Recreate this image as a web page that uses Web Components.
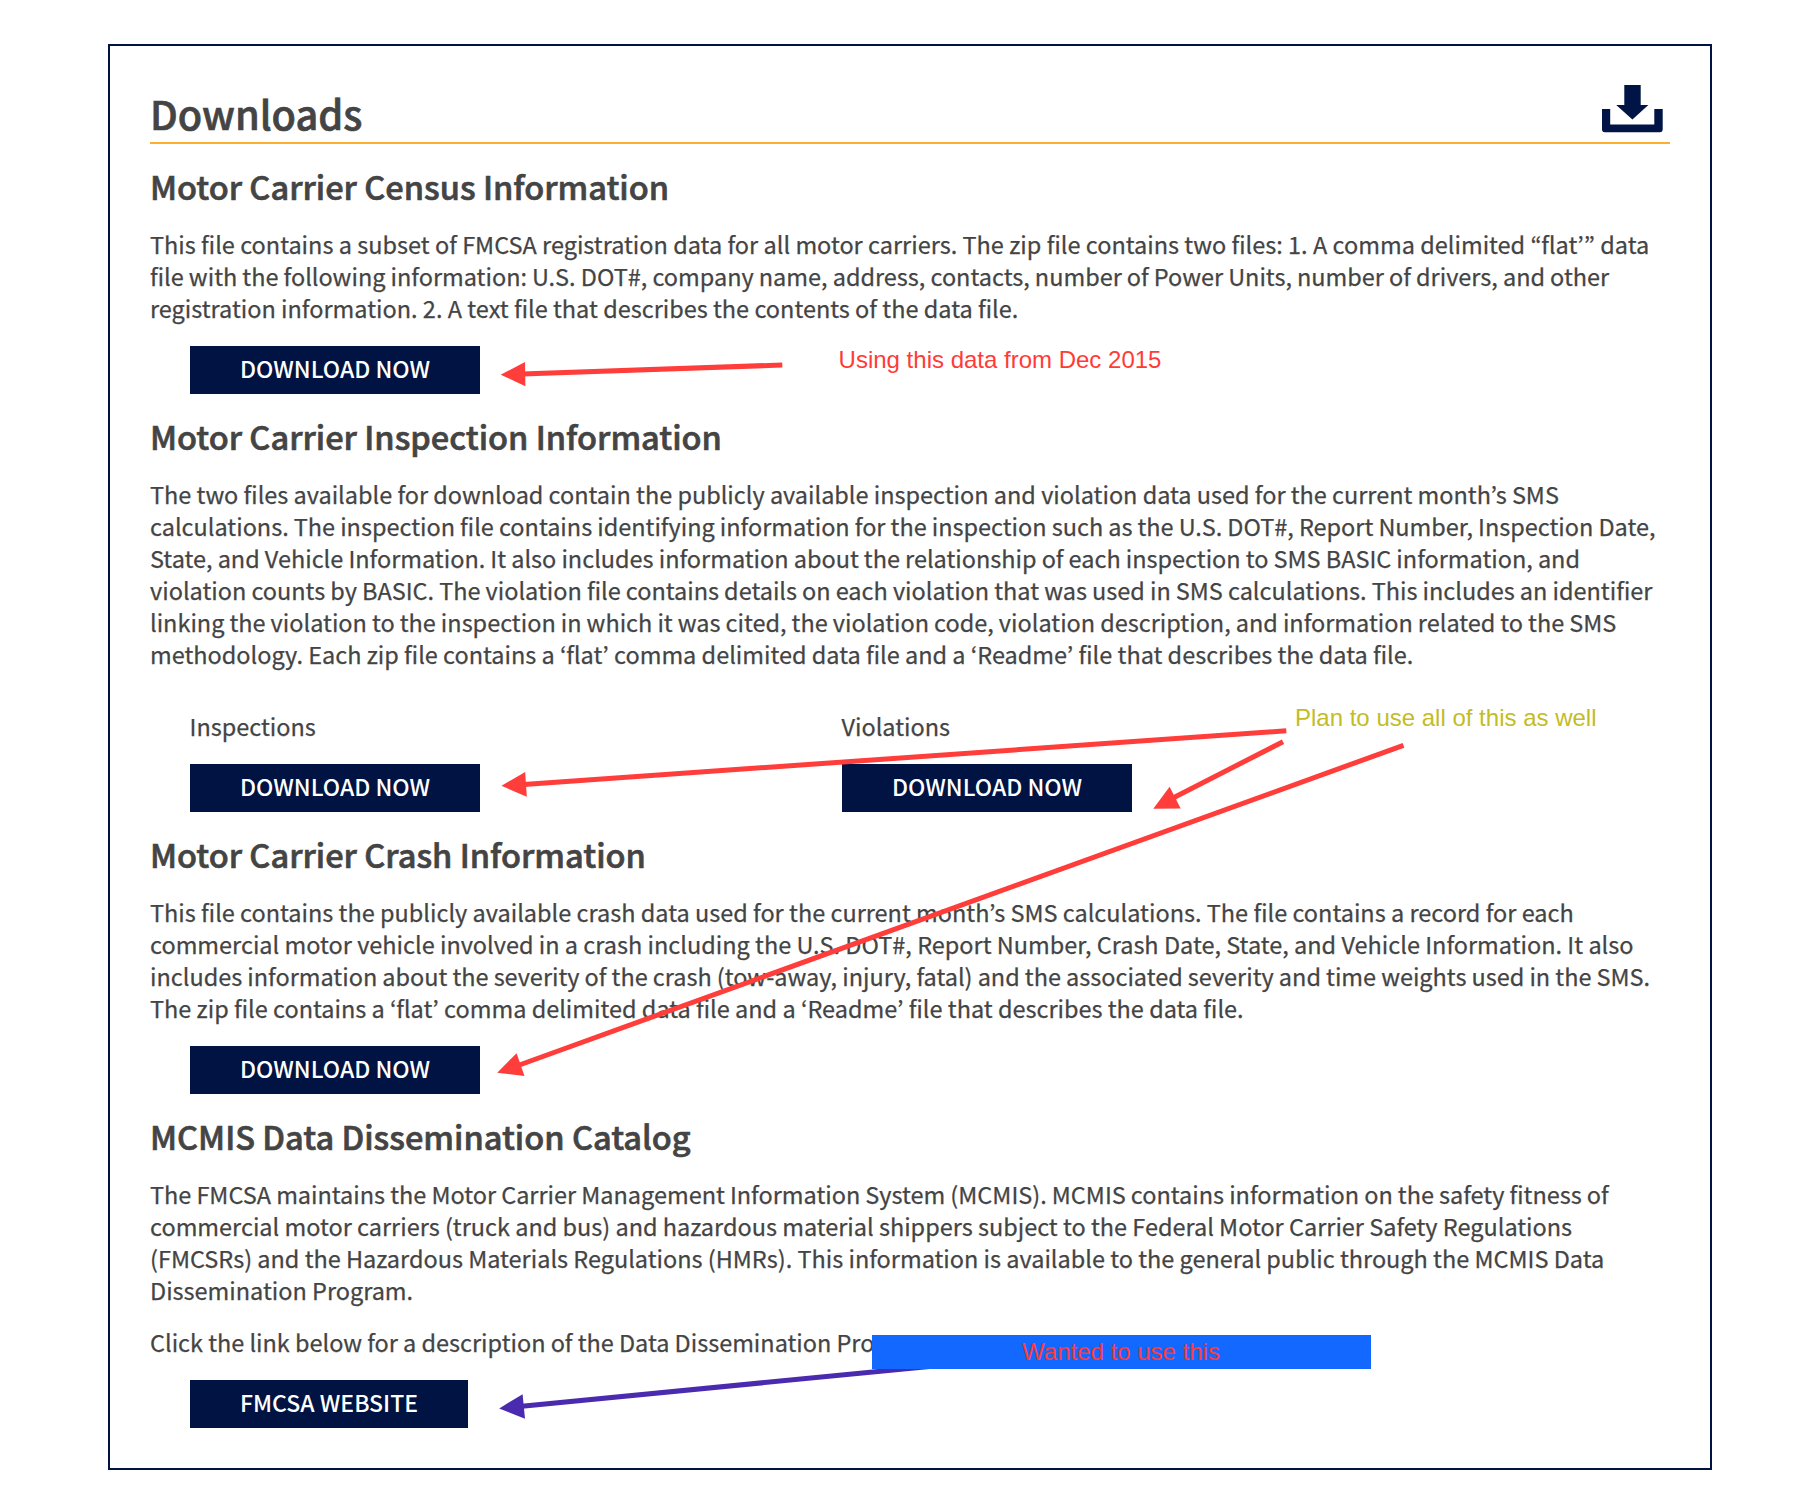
<!DOCTYPE html>
<html lang="en">
<head>
<meta charset="utf-8">
<title>Downloads</title>
<style>
  html, body { margin: 0; background: #fff; }
  body { width: 1796px; height: 1496px; overflow: hidden; position: relative;
         font-family: "Noto Sans CJK KR", "Noto Sans", sans-serif; color: #444; }
</style>
</head>
<body>
<dl-panel>
  <span slot="title">Downloads</span>
  <dl-section heading="Motor Carrier Census Information">
    <dl-text>
      <dl-line style="word-spacing:.09px">This file contains a subset of FMCSA registration data for all motor carriers. The zip file contains two files: 1. A comma delimited “flat’” data</dl-line>
      <dl-line style="word-spacing:-.14px">file with the following information: U.S. DOT#, company name, address, contacts, number of Power Units, number of drivers, and other</dl-line>
      <dl-line style="word-spacing:.08px">registration information. 2. A text file that describes the contents of the data file.</dl-line>
    </dl-text>
    <dl-button slot="actions">DOWNLOAD NOW</dl-button>
  </dl-section>
  <dl-section heading="Motor Carrier Inspection Information">
    <dl-text>
      <dl-line style="word-spacing:-.03px">The two files available for download contain the publicly available inspection and violation data used for the current month’s SMS</dl-line>
      <dl-line style="word-spacing:-.17px">calculations. The inspection file contains identifying information for the inspection such as the U.S. DOT#, Report Number, Inspection Date,</dl-line>
      <dl-line style="word-spacing:-.14px">State, and Vehicle Information. It also includes information about the relationship of each inspection to SMS BASIC information, and</dl-line>
      <dl-line style="word-spacing:-.15px">violation counts by BASIC. The violation file contains details on each violation that was used in SMS calculations. This includes an identifier</dl-line>
      <dl-line style="word-spacing:-.2px">linking the violation to the inspection in which it was cited, the violation code, violation description, and information related to the SMS</dl-line>
      <dl-line>methodology. Each zip file contains a ‘flat’ comma delimited data file and a ‘Readme’ file that describes the data file.</dl-line>
    </dl-text>
    <dl-choice slot="actions" label="Inspections"><dl-button>DOWNLOAD NOW</dl-button></dl-choice>
    <dl-choice slot="actions" label="Violations"><dl-button>DOWNLOAD NOW</dl-button></dl-choice>
  </dl-section>
  <dl-section heading="Motor Carrier Crash Information">
    <dl-text>
      <dl-line style="word-spacing:.05px">This file contains the publicly available crash data used for the current month’s SMS calculations. The file contains a record for each</dl-line>
      <dl-line style="word-spacing:.05px">commercial motor vehicle involved in a crash including the U.S. DOT#, Report Number, Crash Date, State, and Vehicle Information. It also</dl-line>
      <dl-line style="word-spacing:-.15px">includes information about the severity of the crash (tow-away, injury, fatal) and the associated severity and time weights used in the SMS.</dl-line>
      <dl-line style="word-spacing:.03px">The zip file contains a ‘flat’ comma delimited data file and a ‘Readme’ file that describes the data file.</dl-line>
    </dl-text>
    <dl-button slot="actions">DOWNLOAD NOW</dl-button>
  </dl-section>
  <dl-section heading="MCMIS Data Dissemination Catalog">
    <dl-text>
      <dl-line style="word-spacing:-.15px">The FMCSA maintains the Motor Carrier Management Information System (MCMIS). MCMIS contains information on the safety fitness of</dl-line>
      <dl-line>commercial motor carriers (truck and bus) and hazardous material shippers subject to the Federal Motor Carrier Safety Regulations</dl-line>
      <dl-line>(FMCSRs) and the Hazardous Materials Regulations (HMRs). This information is available to the general public through the MCMIS Data</dl-line>
      <dl-line>Dissemination Program.</dl-line>
    </dl-text>
    <dl-text><dl-line style="word-spacing:-.1px">Click the link below for a description of the Data Dissemination Pro</dl-line></dl-text>
    <dl-button slot="actions">FMCSA WEBSITE</dl-button>
  </dl-section>
</dl-panel>
<note-layer>
  <note-label style="left:838.6px;top:346px;color:#ff3b38">Using this data from Dec 2015</note-label>
  <note-label style="left:1295px;top:704px;color:#c3bc27">Plan to use all of this as well</note-label>
  <note-label style="left:872px;top:1335px;width:499px;height:34px;background:#1268ff;color:#ff3b38;justify-content:center;box-sizing:border-box;padding:3px 1px 0 0">Wanted to use this</note-label>
</note-layer>
<script>
function define(name, html) {
  const t = document.createElement('template');
  t.innerHTML = html;
  customElements.define(name, class extends HTMLElement {
    constructor() {
      super();
      this.attachShadow({ mode: 'open' }).appendChild(t.content.cloneNode(true));
    }
    connectedCallback() {
      for (const n of this.shadowRoot.querySelectorAll('[data-attr]'))
        n.textContent = this.getAttribute(n.dataset.attr) || '';
    }
  });
}

define('dl-icon', `
  <style>
    :host { display: block; width: 64px; height: 54px; }
    svg { display: block; filter: blur(.45px); }
  </style>
  <svg width="64" height="54" viewBox="0 0 64 54" fill="#001545">
    <path d="M24.3 5H40.7V24.9H48.4L32.4 39.4L16.2 24.9H24.3Z"/>
    <path d="M2 29H10.2V44.6H54.3V29H62.7V49.3Q62.7 52.2 59.8 52.2H4.9Q2 52.2 2 49.3Z"/>
  </svg>`);

define('dl-panel', `
  <style>
    :host { display: flex; flex-direction: column; box-sizing: border-box;
            width: 1604px; height: 1426px; margin: 44px 0 0 108px; border: 2px solid #001342;
            padding: 38px 40px 0; }
    header { display: flex; justify-content: space-between; align-items: flex-start;
             height: 58px; border-bottom: 2px solid #fdb030; padding-right: 6px; }
    h1 { margin: 0; font-size: 39.75px; font-weight: 500; line-height: 58px;
         -webkit-text-stroke: .65px currentColor; }
    dl-icon { margin-top: -4px; }
  </style>
  <header><h1><slot name="title"></slot></h1><dl-icon></dl-icon></header>
  <slot></slot>`);

define('dl-section', `
  <style>
    :host { display: flex; flex-direction: column; padding-top: 18px; }
    h2 { margin: 0 0 19px; font-size: 32.6px; font-weight: 500; line-height: 47px;
         white-space: nowrap; -webkit-text-stroke: .65px currentColor; }
    .body { display: flex; flex-direction: column; gap: 20px; }
    .actions { display: flex; padding: 22px 0 0 40px; }
  </style>
  <h2 data-attr="heading"></h2>
  <div class="body"><slot></slot></div>
  <div class="actions"><slot name="actions"></slot></div>`);

define('dl-text', `
  <style>
    :host { display: flex; flex-direction: column; font-size: 23.48px; line-height: 32px;
            -webkit-text-stroke: .25px currentColor; }
  </style>
  <slot></slot>`);

define('dl-line', `
  <style>:host { display: block; white-space: nowrap; }</style>
  <slot></slot>`);

define('dl-button', `
  <style>
    :host { display: flex; width: max-content; height: 48px; background: #001342; color: #fff;
            padding: 0 50px; font-size: 23px; font-weight: 500; line-height: 45px; white-space: nowrap; }
  </style>
  <slot></slot>`);

define('dl-choice', `
  <style>
    :host { display: flex; flex-direction: column; gap: 22px; width: 652px; padding-top: 18px; }
    span { font-size: 23.48px; line-height: 32px; margin-left: -.5px; -webkit-text-stroke: .25px currentColor; }
  </style>
  <span data-attr="label"></span>
  <slot></slot>`);

define('note-label', `
  <style>
    :host { position: absolute; display: flex; font: 24px/28px "Liberation Sans", Arial, sans-serif;
            white-space: nowrap; }
  </style>
  <slot></slot>`);

define('note-layer', `
  <style>
    :host { position: absolute; left: 0; top: 0; width: 1796px; height: 1496px; pointer-events: none; }
    svg { position: absolute; left: 0; top: 0; }
  </style>
  <svg width="1796" height="1496" viewBox="0 0 1796 1496" stroke-width="5">
    <g stroke="#ff3d3a">
      <path d="M782.3 365L522 373.9"/>
      <path d="M1286.3 730.8L524 784.5"/>
      <path d="M1283 741.7L1172 798.5"/>
      <path d="M1403.5 745.3L518 1065.5"/>
    </g>
    <g fill="#ff3d3a">
      <path d="M500.7 374.7L525 362L525.4 386.2Z"/>
      <path d="M501.5 785.8L525.2 772L526.8 796.8Z"/>
      <path d="M1153.3 808.7L1169.6 786.7L1180.7 808.5Z"/>
      <path d="M497.2 1072.7L516.6 1053.2L524.5 1076Z"/>
    </g>
    <path d="M950 1364.5L522 1406.2" stroke="#4a2aae"/>
    <path d="M499.2 1408.4L522.6 1394.2L525 1418.8Z" fill="#4a2aae"/>
  </svg>
  <slot></slot>`);
</script>
</body>
</html>
